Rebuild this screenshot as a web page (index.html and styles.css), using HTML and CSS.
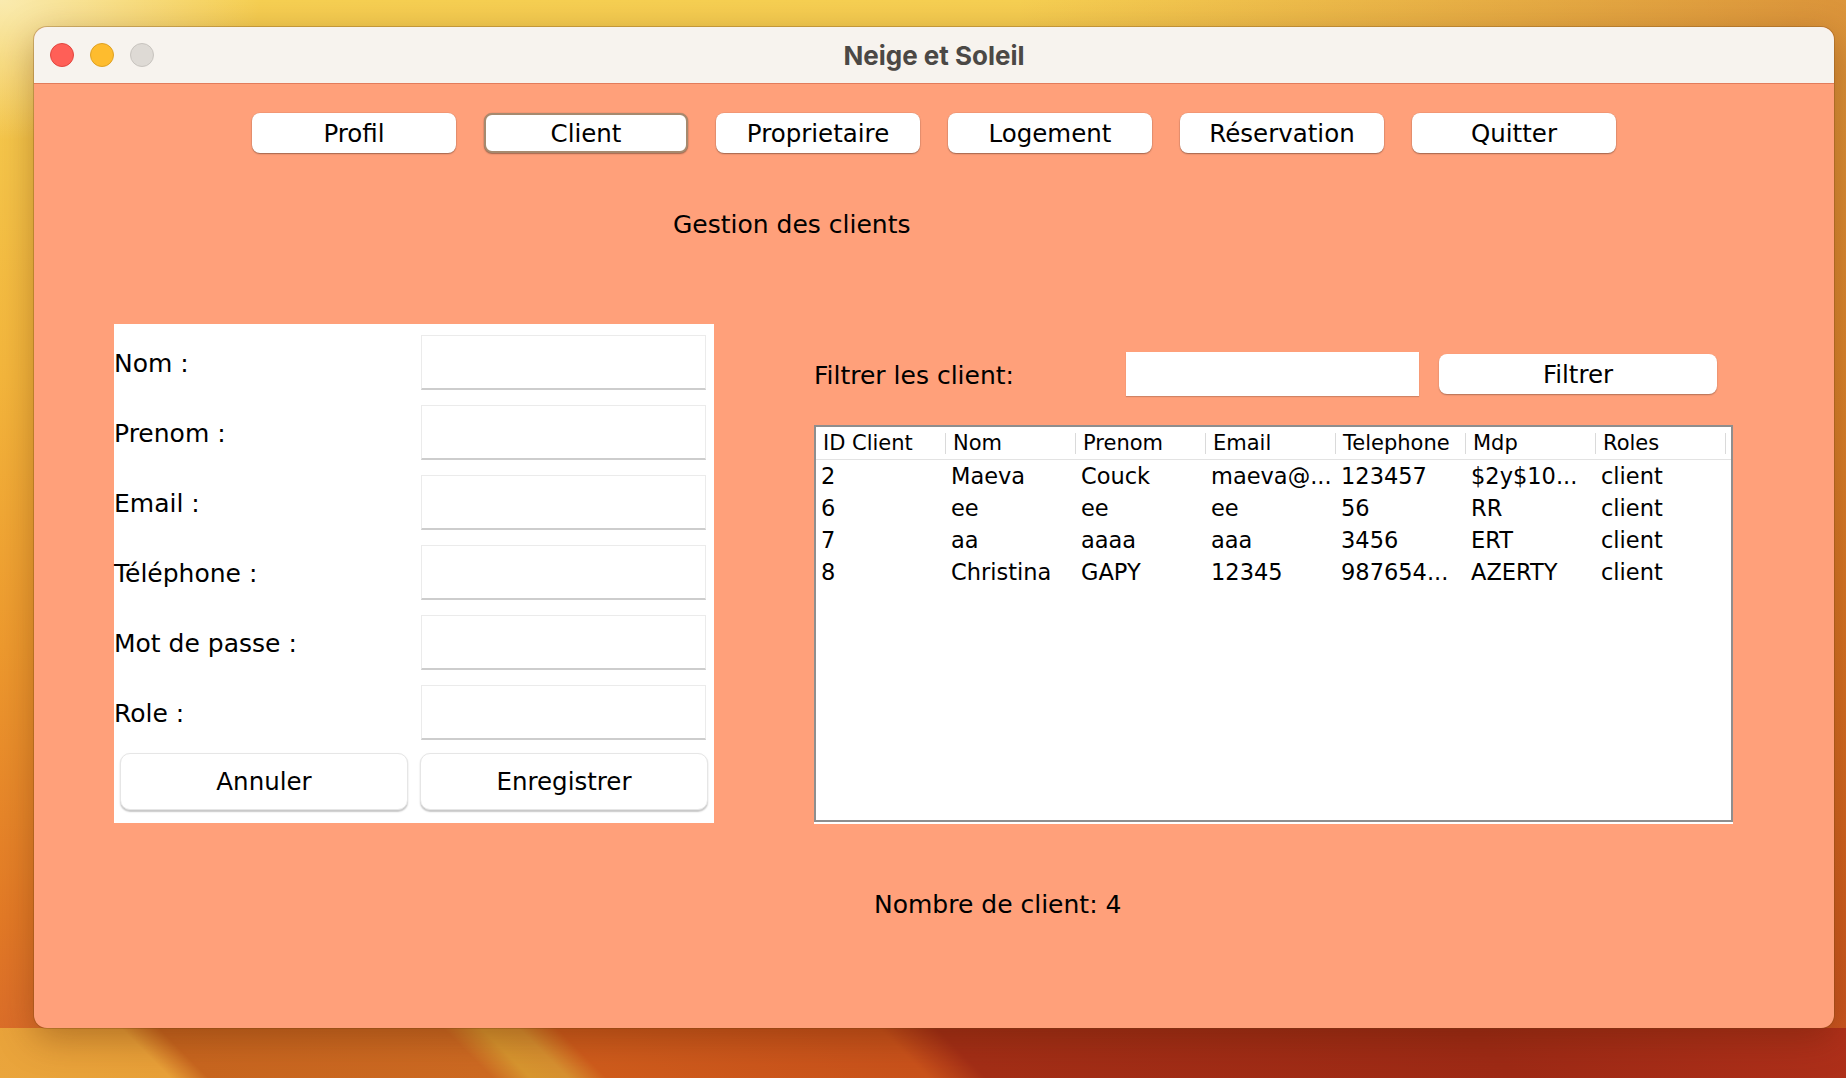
FILE: index.html
```html
<!DOCTYPE html>
<html lang="fr">
<head>
<meta charset="utf-8">
<title>Neige et Soleil</title>
<link rel="stylesheet" href="styles.css">
</head>
<body>
<div class="window">
  <div class="titlebar">
    <div class="lights">
      <span class="light red"></span>
      <span class="light yellow"></span>
      <span class="light gray"></span>
    </div>
    <div class="title">Neige et Soleil</div>
    <div></div>
  </div>
  <div class="content">
    <div class="nav">
      <div class="nav-btn">Profil</div>
      <div class="nav-btn active">Client</div>
      <div class="nav-btn">Proprietaire</div>
      <div class="nav-btn">Logement</div>
      <div class="nav-btn">Réservation</div>
      <div class="nav-btn">Quitter</div>
    </div>
    <div class="heading">Gestion des clients</div>
    <div class="main">
      <div class="form-panel">
        <div class="fields">
          <div class="field-row"><span class="label">Nom :</span><div class="field"></div></div>
          <div class="field-row"><span class="label">Prenom :</span><div class="field"></div></div>
          <div class="field-row"><span class="label">Email :</span><div class="field"></div></div>
          <div class="field-row"><span class="label">Téléphone :</span><div class="field"></div></div>
          <div class="field-row"><span class="label">Mot de passe :</span><div class="field"></div></div>
          <div class="field-row"><span class="label">Role :</span><div class="field"></div></div>
        </div>
        <div class="form-actions">
          <div class="form-btn">Annuler</div>
          <div class="form-btn">Enregistrer</div>
        </div>
      </div>
      <div class="right">
        <div class="filter-row">
          <span class="filter-label">Filtrer les client:</span>
          <div class="filter-input"></div>
          <div class="filter-btn">Filtrer</div>
        </div>
        <div class="table-wrap">
          <div class="table-box">
            <div class="thead">
              <div class="th">ID Client</div>
              <div class="th">Nom</div>
              <div class="th">Prenom</div>
              <div class="th">Email</div>
              <div class="th">Telephone</div>
              <div class="th">Mdp</div>
              <div class="th">Roles</div>
            </div>
            <div class="tr">
              <div class="td">2</div><div class="td">Maeva</div><div class="td">Couck</div><div class="td">maeva@...</div><div class="td">123457</div><div class="td">$2y$10...</div><div class="td">client</div>
            </div>
            <div class="tr">
              <div class="td">6</div><div class="td">ee</div><div class="td">ee</div><div class="td">ee</div><div class="td">56</div><div class="td">RR</div><div class="td">client</div>
            </div>
            <div class="tr">
              <div class="td">7</div><div class="td">aa</div><div class="td">aaaa</div><div class="td">aaa</div><div class="td">3456</div><div class="td">ERT</div><div class="td">client</div>
            </div>
            <div class="tr">
              <div class="td">8</div><div class="td">Christina</div><div class="td">GAPY</div><div class="td">12345</div><div class="td">987654...</div><div class="td">AZERTY</div><div class="td">client</div>
            </div>
          </div>
        </div>
      </div>
    </div>
    <div class="count">Nombre de client: 4</div>
  </div>
</div>
</body>
</html>
```

FILE: styles.css
```css
* { box-sizing: border-box; }

html, body { margin: 0; }

body {
  width: 1846px;
  height: 1078px;
  overflow: hidden;
  padding: 27px 0 0 34px;
  font-family: "DejaVu Sans", sans-serif;
  color: #000;
  background-color: #e48a2c;
  background-image:
    linear-gradient(45deg, #eaa53c 0%, #e8a038 9%, #c8661f 11%, #cd6a22 26%, #d8962f 28%, #d79030 30%, #cf5c1c 32%, #c9521b 49%, #a32e16 52%, #9e2a15 80%, #b0301a 100%),
    radial-gradient(ellipse 260px 140px at 0% 0%, rgba(250, 236, 180, 0.95), rgba(250, 236, 180, 0)),
    linear-gradient(to right, rgba(255, 255, 255, 0) 55%, rgba(170, 40, 15, 0.35) 100%),
    linear-gradient(to bottom, #f6cf52 0%, #f4b63c 35%, #ee9a2e 60%, #e37a26 85%, #d8682a 100%);
  background-size: 1846px 50px, auto, auto, auto;
  background-position: left bottom, 0 0, 0 0, 0 0;
  background-repeat: no-repeat;
}

.window {
  width: 1800px;
  height: 1001px;
  border-radius: 13px;
  overflow: hidden;
  background: #ffa07a;
  box-shadow: 0 0 0 1px rgba(120, 70, 20, 0.3), 0 10px 36px rgba(80, 30, 0, 0.35);
}

.titlebar {
  height: 57px;
  background: #f7f3ee;
  border-bottom: 1px solid #e27c5b;
  display: grid;
  grid-template-columns: 1fr auto 1fr;
  align-items: center;
}

.lights {
  display: flex;
  gap: 16px;
  padding-left: 16px;
}

.light {
  width: 24px;
  height: 24px;
  border-radius: 50%;
  display: block;
}

.light.red { background: #ff5f57; border: 1px solid #e2463f; }
.light.yellow { background: #febc2e; border: 1px solid #dfa123; }
.light.gray { background: #dedad5; border: 1px solid #c8c4bf; }

.title {
  font-family: "Inter", "DejaVu Sans", sans-serif;
  font-weight: 700;
  font-size: 26px;
  color: #4b4845;
}

.nav {
  display: flex;
  justify-content: center;
  gap: 28px;
  padding-top: 29px;
}

.nav-btn {
  width: 204px;
  height: 40px;
  background: #fff;
  border-radius: 8px;
  box-shadow: 0 1px 1.5px rgba(0, 0, 0, 0.35), 0 0 0 0.5px rgba(0, 0, 0, 0.08);
  font-size: 24.5px;
  display: flex;
  align-items: center;
  justify-content: center;
}

.nav-btn.active {
  border: 2px solid #a68a6f;
}

.heading {
  margin: 57px 0 0 639px;
  font-size: 25px;
  line-height: 30px;
}

.main {
  display: flex;
  margin-top: 84px;
  padding-left: 80px;
}

.form-panel {
  width: 600px;
  height: 499px;
  background: #fff;
  padding: 11px 0 0 0;
}

.fields {
  display: flex;
  flex-direction: column;
  gap: 15px;
}

.field-row {
  display: grid;
  grid-template-columns: 307px 285px;
  align-items: center;
  height: 55px;
}

.label {
  font-size: 25px;
  padding-top: 2px;
}

.field {
  height: 55px;
  background: #fff;
  border: 1px solid #ebebeb;
  border-bottom: 2px solid #cdcdcd;
}

.form-actions {
  display: grid;
  grid-template-columns: 288px 288px;
  gap: 12px;
  margin-top: 13px;
  padding-left: 6px;
}

.form-btn {
  height: 57px;
  background: #fff;
  border-radius: 10px;
  border: 1px solid #e6e6e6;
  box-shadow: 0 1.5px 1.5px rgba(0, 0, 0, 0.22);
  font-size: 24.5px;
  display: flex;
  align-items: center;
  justify-content: center;
}

.right {
  margin-left: 100px;
  width: 919px;
}

.filter-row {
  display: flex;
  align-items: center;
  margin-top: 28px;
  height: 44px;
}

.filter-label {
  width: 312px;
  font-size: 25px;
  padding-top: 2px;
}

.filter-input {
  width: 293px;
  height: 44px;
  background: #fff;
  box-shadow: 0 1px 1px rgba(0, 0, 0, 0.18);
}

.filter-btn {
  margin-left: 20px;
  width: 278px;
  height: 40px;
  background: #fff;
  border-radius: 8px;
  box-shadow: 0 1px 1.5px rgba(0, 0, 0, 0.3);
  font-size: 24.5px;
  display: flex;
  align-items: center;
  justify-content: center;
}

.table-wrap {
  margin-top: 29px;
  height: 399px;
  background: #fff;
  padding-bottom: 2px;
}

.table-box {
  height: 397px;
  border: 2px solid #8e8e8e;
  background: #fff;
}

.thead {
  display: grid;
  grid-template-columns: repeat(7, 130px);
  height: 33px;
  border-bottom: 1px solid #e3e3e3;
}

.th {
  font-size: 21px;
  padding-left: 7px;
  display: flex;
  align-items: center;
  background: linear-gradient(#dadada, #dadada) right center / 1px 21px no-repeat;
}

.tr {
  display: grid;
  grid-template-columns: repeat(7, 130px);
  height: 32px;
}

.td {
  font-size: 22.5px;
  padding-left: 5px;
  display: flex;
  align-items: center;
  white-space: nowrap;
  overflow: hidden;
}

.count {
  margin: 66px 0 0 840px;
  font-size: 25px;
  line-height: 30px;
}
```
